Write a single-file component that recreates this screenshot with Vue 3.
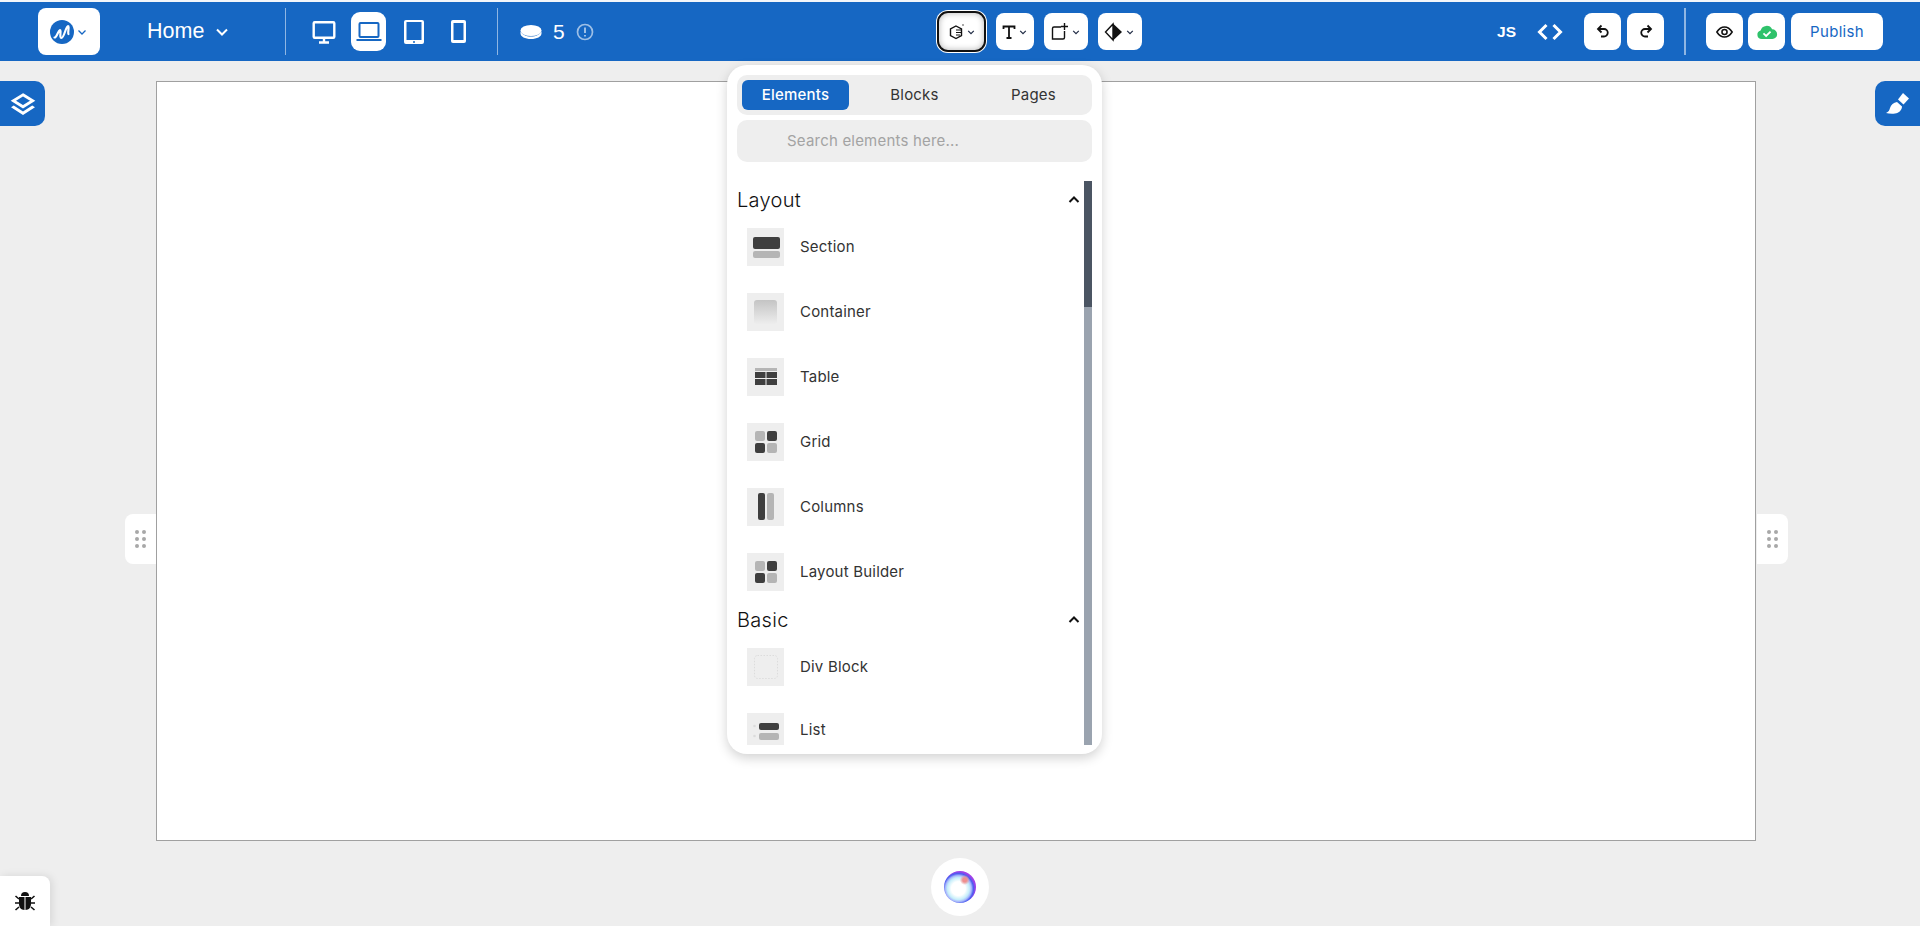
<template>
  <div class="page">
    <header class="topbar">
      <div class="left">
        <button class="logo-btn">
          <svg width="24" height="24" viewBox="0 0 24 24">
            <circle cx="12" cy="12" r="12" fill="#1667c3" />
            <path d="M4.500 17.500C7 17.500 8 10.500 10 10c1.500 0-1 8 1.500 8C14 18 16 6 18 6c1.500 0-.5 7 .5 8" fill="none" stroke="#fff" stroke-width="2.200" stroke-linecap="round" stroke-linejoin="round" />
          </svg>
          <svg class="chev" width="10" height="10" viewBox="0 0 10 10"><path d="M1.500 3.500 5 7l3.500-3.500" fill="none" stroke="#1667c3" stroke-width="1.300" /></svg>
        </button>
        <div class="home">
          <span>Home</span>
          <svg width="14" height="14" viewBox="0 0 14 14"><path d="M2 4.500 7 9.500l5-5" fill="none" stroke="#fff" stroke-width="2" /></svg>
        </div>
        <i class="divider"></i>
        <div class="devices">
          <span class="device">
            <svg width="26" height="26" viewBox="0 0 26 26" fill="none" stroke="#fff" stroke-width="2.400"><rect x="2.700" y="3.200" width="20.600" height="15.600" rx="1" /><path d="M13 19v4M8 23.500h10" /></svg>
          </span>
          <span class="device active">
            <svg width="26" height="26" viewBox="0 0 26 26" fill="none" stroke="#1667c3" stroke-width="2"><rect x="3.500" y="4" width="19" height="14" rx="1" /><path d="M0.500 21h25" /></svg>
          </span>
          <span class="device">
            <svg width="24" height="26" viewBox="0 0 24 26"><rect x="2" y="1" width="20" height="24" rx="2" fill="#fff" /><rect x="4.500" y="3" width="15" height="18" fill="#1667c3" /><circle cx="12" cy="23" r="1" fill="#1667c3" /></svg>
          </span>
          <span class="device">
            <svg width="19" height="25" viewBox="0 0 19 25"><rect x="2" y="1" width="15" height="23" rx="2" fill="#fff" /><rect x="4.500" y="4" width="10" height="17" fill="#1667c3" /></svg>
          </span>
        </div>
        <i class="divider"></i>
        <div class="credits">
          <svg width="22" height="16" viewBox="0 0 22 16"><ellipse cx="11" cy="6.500" rx="10.500" ry="5.500" fill="#fff" /><path d="M.5 7v2.500C.5 12.500 5 15 11 15s10.500-2.500 10.500-5.500V7C20.500 10.500 16 12.500 11 12.500S1.500 10.500.5 7z" fill="#fff" /></svg>
          <span class="count">5</span>
          <svg width="18" height="18" viewBox="0 0 18 18" fill="none" stroke="#9dbfe6" stroke-width="1.700"><circle cx="9" cy="9" r="7.500" /><path d="M9 4.500v5.500M9 12v1.500" stroke-width="2" /></svg>
        </div>
      </div>

      <div class="center">
        <button class="tool focused">
          <svg width="18" height="18" viewBox="0 0 18 18" fill="none" stroke="#111" stroke-width="1.400"><path d="M9 3 14.500 6v6.500L9 15.500l-5.500-3V6z" /><path d="M9 7h5M9 9.500h5M9 12h4" stroke-width="1.100" /><circle cx="16" cy="2" r=".7" fill="#111" stroke="none" /></svg>
          <svg class="caret" viewBox="0 0 10 10"><path d="M1.500 3.500 5 7l3.500-3.500" fill="none" stroke="#1f2a44" stroke-width="1.500" /></svg>
        </button>
        <button class="tool narrow">
          <svg width="16" height="18" viewBox="0 0 16 18" fill="none" stroke="#111" stroke-width="1.800"><path d="M2.500 6V3.500h11V6M8 3.500V15M5.500 15h5" /></svg>
          <svg class="caret" viewBox="0 0 10 10"><path d="M1.500 3.500 5 7l3.500-3.500" fill="none" stroke="#1f2a44" stroke-width="1.500" /></svg>
        </button>
        <button class="tool mid">
          <svg width="20" height="20" viewBox="0 0 20 20" fill="none" stroke="#111" stroke-width="1.400"><path d="M11 5H4a1.500 1.500 0 0 0-1.500 1.500V17H13a1.500 1.500 0 0 0 1.500-1.500V9" /><path d="M14.500 1v7M11 4.500h7" /></svg>
          <svg class="caret" viewBox="0 0 10 10"><path d="M1.500 3.500 5 7l3.500-3.500" fill="none" stroke="#1f2a44" stroke-width="1.500" /></svg>
        </button>
        <button class="tool mid">
          <svg width="20" height="20" viewBox="0 0 20 20"><path d="M9 2 1.500 10 9 18z" fill="none" stroke="#111" stroke-width="1.400" /><path d="M9 1.500 18 10l-9 8.500z" fill="#111" /></svg>
          <svg class="caret" viewBox="0 0 10 10"><path d="M1.500 3.500 5 7l3.500-3.500" fill="none" stroke="#1f2a44" stroke-width="1.500" /></svg>
        </button>
      </div>

      <div class="right">
        <span class="js">JS</span>
        <svg class="code" width="26" height="18" viewBox="0 0 26 18" fill="none" stroke="#fff" stroke-width="3"><path d="M9.500 2 2.500 9l7 7M16.500 2l7 7-7 7" /></svg>
        <div class="undo-redo">
          <button class="sq">
            <svg width="16" height="16" viewBox="0 0 16 16" fill="none" stroke="#111" stroke-width="1.800"><path d="M6.500 1.500 3 5l3.500 3.500" /><path d="M3 5h6a3.750 3.750 0 0 1 0 7.500H6" /></svg>
          </button>
          <button class="sq">
            <svg width="16" height="16" viewBox="0 0 16 16" fill="none" stroke="#111" stroke-width="1.800"><path d="M9.500 1.500 13 5 9.500 8.500" /><path d="M13 5H7a3.750 3.750 0 0 0 0 7.500h3" /></svg>
          </button>
        </div>
        <i class="divider light"></i>
        <div class="actions">
          <button class="sq">
            <svg width="17" height="12" viewBox="0 0 20 14" fill="none" stroke="#111" stroke-width="1.800"><path d="M1 7c2.500-4 5.500-6 9-6s6.500 2 9 6c-2.500 4-5.500 6-9 6s-6.500-2-9-6z" /><circle cx="10" cy="7" r="3" /></svg>
          </button>
          <button class="sq">
            <svg width="22" height="16" viewBox="0 0 24 18"><path d="M6 17A5 5 0 0 1 4.800 7.200 7 7 0 0 1 17.800 6 5.500 5.500 0 0 1 18 17z" fill="#2fc26b" /><path d="M8 10.500l3 3 5-5" fill="none" stroke="#fff" stroke-width="2" /></svg>
          </button>
          <button class="publish">Publish</button>
        </div>
      </div>
    </header>

    <main class="workspace">
      <button class="side-tab left-tab">
        <svg width="26" height="24" viewBox="0 0 28 26"><path d="M14 3 24.500 9.500 14 16 3.500 9.500z" fill="none" stroke="#fff" stroke-width="3" /><path d="M4 14.500 14 21l10-6.500 3 2-13 8.500-13-8.500z" fill="#fff" /></svg>
      </button>

      <section class="canvas">
        <div class="handle handle-left"><span class="dots"><i v-for="n in 6" :key="n"></i></span></div>
        <div class="handle handle-right"><span class="dots"><i v-for="n in 6" :key="n"></i></span></div>

        <div class="panel">
          <div class="tabs">
            <button v-for="t in tabs" :key="t" class="tab" :class="{ on: t === 'Elements' }">{{ t }}</button>
          </div>
          <div class="search">Search elements here...</div>
          <div class="list">
            <div class="scroll-track"><div class="scroll-thumb"></div></div>
            <div v-for="group in groups" :key="group.title" class="group">
              <div class="group-head">
                <span>{{ group.title }}</span>
                <svg width="12" height="12" viewBox="0 0 12 12"><path d="M1.500 8 6 3.500 10.500 8" fill="none" stroke="#111" stroke-width="2" /></svg>
              </div>
              <div class="items">
                <div v-for="item in group.items" :key="item.name" class="item">
                  <span class="thumb">
                    <svg width="37" height="38" viewBox="0 0 37 38" v-html="icons[item.icon]"></svg>
                  </span>
                  <span class="name">{{ item.name }}</span>
                </div>
              </div>
            </div>
          </div>
        </div>
      </section>

      <button class="side-tab right-tab">
        <svg width="23" height="21" viewBox="0 0 23 21"><path d="M12 6.500 17 0l6 5.500-5.500 6z" fill="#fff" /><path d="M0 20c2.500-1 3.500-3 4-5 1-3 3.500-5.500 7-6l5 4.500c0 3.500-3 6.500-7 7-3.500.5-6.500 0-9-.5z" fill="#fff" /></svg>
      </button>
    </main>

    <div class="assistant">
      <span class="orb-wrap"><span class="orb"></span></span>
    </div>

    <button class="bug">
      <svg width="22" height="22" viewBox="0 0 22 22"><path d="M7 6a4 4 0 0 1 8 0z" fill="#111" /><path d="M5 7h5.500v13C7 20 5 17 5 14zM11.500 7H17v7c0 3-2 6-5.500 6z" fill="#111" /><path d="M1.500 6 5 9M20.500 6 17 9M1 13h4M21 13h-4M1.500 20 5 17M20.500 20 17 17" stroke="#111" stroke-width="1.600" /></svg>
    </button>
  </div>
</template>

<script setup>
const tabs = ['Elements', 'Blocks', 'Pages']

const dark = '#3f3f3f'
const light = '#b5b5b5'

// little previews for the element list
const icons = {
  section: `<rect x="6" y="9" width="27" height="12" rx="2" fill="${dark}"/><rect x="6" y="23" width="27" height="7" rx="2" fill="${light}"/>`,
  container: `<defs><linearGradient id="cg" x1="0" y1="0" x2="0" y2="1"><stop offset="0" stop-color="#c4c4c4"/><stop offset="1" stop-color="#ededed"/></linearGradient></defs><rect x="7" y="7" width="23" height="24" rx="3" fill="url(#cg)"/>`,
  table: `<rect x="8" y="10" width="22" height="3" fill="${light}"/><rect x="8" y="14" width="10.500" height="6" fill="${dark}"/><rect x="19.500" y="14" width="10.500" height="6" fill="${dark}"/><rect x="8" y="21" width="10.500" height="6" fill="${dark}"/><rect x="19.500" y="21" width="10.500" height="6" fill="${dark}"/>`,
  grid: `<rect x="8" y="8" width="10" height="10" rx="2" fill="${light}"/><rect x="20" y="8" width="10" height="10" rx="2" fill="${dark}"/><rect x="8" y="20" width="10" height="10" rx="2" fill="${dark}"/><rect x="20" y="20" width="10" height="10" rx="2" fill="${light}"/>`,
  columns: `<rect x="11" y="5" width="7" height="27" rx="2" fill="${dark}"/><rect x="20" y="5" width="7" height="27" rx="2" fill="${light}"/>`,
  div: `<rect x="7.500" y="7.500" width="23" height="23" rx="3" fill="none" stroke="#dcdcdc" stroke-dasharray="1.500 1.500"/>`,
  list: `<circle cx="7.500" cy="13" r="1.300" fill="#dcdcdc"/><circle cx="7.500" cy="23" r="1.300" fill="#dcdcdc"/><rect x="12" y="10" width="20" height="7" rx="2" fill="${dark}"/><rect x="12" y="20" width="20" height="7" rx="2" fill="${light}"/>`
}

const groups = [
  {
    title: 'Layout',
    items: [
      { name: 'Section', icon: 'section' },
      { name: 'Container', icon: 'container' },
      { name: 'Table', icon: 'table' },
      { name: 'Grid', icon: 'grid' },
      { name: 'Columns', icon: 'columns' },
      { name: 'Layout Builder', icon: 'grid' }
    ]
  },
  {
    title: 'Basic',
    items: [
      { name: 'Div Block', icon: 'div' },
      { name: 'List', icon: 'list' }
    ]
  }
]
</script>

<style>
html, body {
  margin: 0;
  padding: 0;
  overflow: hidden;
}
</style>

<style scoped>
.page {
  position: relative;
  height: 926px;
  background: #eeeeee;
  font-family: Inter, "Liberation Sans", sans-serif;
  border-top: 2px solid #f3f6fa;
  box-sizing: border-box;
  overflow: hidden;
}

button {
  border: none;
  padding: 0;
  font-family: inherit;
  display: flex;
  align-items: center;
  justify-content: center;
}

.topbar {
  height: 59px;
  background: #1667c3;
  display: grid;
  grid-template-columns: 937px auto 1fr;
  align-items: center;
}

.left {
  display: flex;
  align-items: center;
  padding-left: 38px;
}

.logo-btn {
  width: 62px;
  height: 47px;
  background: #fff;
  border-radius: 8px;
  gap: 3px;
  padding-right: 2px;
}

.home {
  display: flex;
  align-items: center;
  gap: 11px;
  color: #fff;
  font-family: "Liberation Sans", sans-serif;
  font-size: 21.5px;
  margin-left: 47px;
  width: 138px;
}

.divider {
  width: 1px;
  height: 47px;
  background: #8fb6e3;
  flex: none;
}

.divider.light {
  width: 2px;
  background: #8fb6e3;
}

.devices {
  display: flex;
  align-items: center;
  margin-left: 20px;
  width: 191px;
  gap: 10px;
}

.device {
  width: 35px;
  height: 39px;
  display: flex;
  align-items: center;
  justify-content: center;
  border-radius: 9px;
}

.device.active {
  background: #fff;
}

.credits {
  display: flex;
  align-items: center;
  margin-left: 22px;
  color: #fff;
}

.count {
  font-family: "Liberation Sans", sans-serif;
  font-size: 21px;
  margin: 0 11px;
}

.center {
  display: flex;
  align-items: center;
  gap: 10px;
}

.tool {
  height: 37px;
  background: #fff;
  border-radius: 8px;
  gap: 2px;
  padding-right: 2px;
}

.caret {
  width: 8px;
  height: 8px;
}

.tool.focused {
  width: 45px;
  outline: 2px solid #111;
  box-shadow: 0 0 0 3px #fff, inset 0 0 6px rgba(0, 0, 0, 0.3);
  margin: 0 2px;
  border-radius: 9px;
}

.tool.narrow {
  width: 38px;
}

.tool.mid {
  width: 44px;
}

.right {
  display: flex;
  align-items: center;
  justify-content: flex-end;
  padding-right: 37px;
}

.js {
  color: #fff;
  font-family: "Liberation Sans", sans-serif;
  font-weight: 700;
  font-size: 15.5px;
}

.code {
  margin-left: 21px;
}

.undo-redo {
  display: flex;
  gap: 6px;
  margin-left: 21px;
}

.sq {
  width: 37px;
  height: 37px;
  background: #fff;
  border-radius: 8px;
}

.right > .divider {
  margin: 0 20px;
}

.actions {
  display: flex;
  gap: 5px;
}

.publish {
  width: 92px;
  height: 37px;
  margin-left: 1px;
  background: #fff;
  border-radius: 8px;
  color: #1667c3;
  font-size: 15px;
  letter-spacing: 0.3px;
}

.workspace {
  display: grid;
  grid-template-columns: 156px 1600px 164px;
  padding-top: 20px;
}

.side-tab {
  width: 45px;
  height: 45px;
  background: #1667c3;
}

.left-tab {
  border-radius: 0 10px 10px 0;
}

.right-tab {
  border-radius: 10px 0 0 10px;
  justify-self: end;
}

.canvas {
  position: relative;
  height: 760px;
  background: #fff;
  border: 1px solid #a0a0a0;
  box-sizing: border-box;
}

.handle {
  position: absolute;
  top: 432px;
  width: 31px;
  height: 50px;
  background: #fff;
  display: flex;
  align-items: center;
  justify-content: center;
}

.handle-left {
  left: -32px;
  border-radius: 8px 0 0 8px;
}

.handle-right {
  right: -33px;
  border-radius: 0 8px 8px 0;
}

.dots {
  display: grid;
  grid-template-columns: 4px 4px;
  gap: 3px;
}

.dots i {
  width: 4px;
  height: 4px;
  border-radius: 50%;
  background: #a8a8a8;
}

.panel {
  position: absolute;
  left: 570px;
  top: -17px;
  width: 375px;
  height: 689px;
  background: #fff;
  border-radius: 20px;
  box-shadow: 0 4px 12px rgba(0, 0, 0, 0.18);
  padding: 10px;
  box-sizing: border-box;
}

.tabs {
  height: 40px;
  background: #eee;
  border-radius: 10px;
  display: grid;
  grid-template-columns: 107px 1fr 107px;
  padding: 5px;
  box-sizing: border-box;
  gap: 5px;
}

.tab {
  background: transparent;
  border-radius: 6px;
  font-size: 15px;
  color: #333;
  padding-bottom: 2px;
  letter-spacing: 0.2px;
}

.tab.on {
  background: #1667c3;
  color: #fff;
  font-weight: 500;
}

.search {
  height: 42px;
  margin-top: 5px;
  background: #eee;
  border-radius: 10px;
  color: #a3a3a3;
  font-size: 15px;
  letter-spacing: 0.2px;
  line-height: 42px;
  padding-left: 50px;
}

.list {
  position: relative;
  height: 564px;
  margin-top: 19px;
  overflow: hidden;
}

.scroll-track {
  position: absolute;
  right: 0;
  top: 0;
  bottom: 0;
  width: 8px;
  background: #9aa3af;
}

.scroll-thumb {
  height: 126px;
  background: #4b5563;
}

.group-head {
  height: 38px;
  display: flex;
  align-items: center;
  justify-content: space-between;
  padding-right: 12px;
  font-size: 20px;
  font-weight: 300;
  letter-spacing: 0.3px;
  color: #111;
}

.items {
  display: flex;
  flex-direction: column;
  gap: 27px;
  padding: 9px 0 10px 10px;
}

.item {
  display: flex;
  align-items: center;
  gap: 16px;
  height: 38px;
  flex: none;
  overflow: hidden;
}

/* last row gets squeezed by the scroll area */
.group:last-of-type .item:last-child {
  height: 32px;
}

.group:last-of-type .item:last-child .name {
  padding-bottom: 0;
}

.thumb {
  width: 37px;
  height: 100%;
  background: #eee;
  display: block;
  flex: none;
  overflow: hidden;
}

.thumb svg {
  display: block;
}

.name {
  font-size: 15px;
  letter-spacing: 0.2px;
  color: #333;
  padding-bottom: 2px;
}

.assistant {
  display: flex;
  justify-content: center;
  padding-top: 17px;
}

.orb-wrap {
  width: 58px;
  height: 58px;
  border-radius: 50%;
  background: #fff;
  display: flex;
  align-items: center;
  justify-content: center;
}

.orb {
  width: 32px;
  height: 32px;
  border-radius: 50%;
  background:
    radial-gradient(circle at 65% 28%, #ef8f8f 0 2px, transparent 5px),
    radial-gradient(circle at 45% 55%, #fff 0 7px, #c5eefa 11px, #a9b8fb 13px, #4a5cf0 15px, #a040e8 17px);
  filter: blur(0.5px);
}

.bug {
  position: absolute;
  left: 0;
  bottom: 0;
  width: 50px;
  height: 50px;
  background: #fff;
  border-radius: 0 8px 0 0;
  box-shadow: 2px 0 8px rgba(0, 0, 0, 0.1);
}
</style>
